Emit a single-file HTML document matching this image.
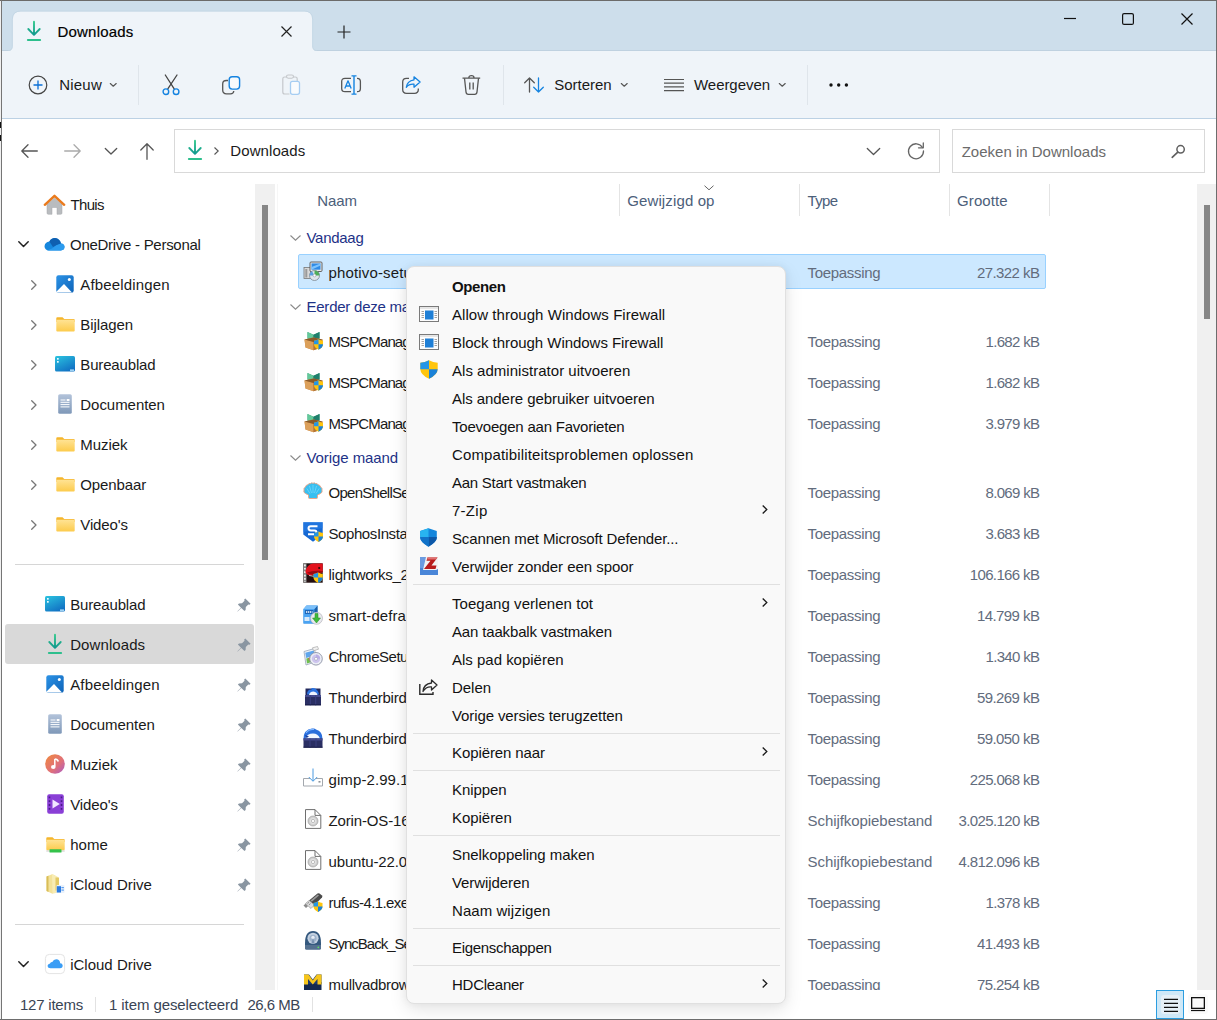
<!DOCTYPE html>
<html lang="nl"><head><meta charset="utf-8"><title>Downloads</title><style>
html,body{margin:0;padding:0;}
body{width:1217px;height:1020px;overflow:hidden;background:#fff;font-family:"Liberation Sans", sans-serif;position:relative;}
.b{position:absolute;box-sizing:border-box;}
.t{position:absolute;white-space:pre;box-sizing:border-box;}
svg{overflow:visible}
</style></head><body>
<div class="b" style="left:0px;top:0px;width:1217px;height:51px;background:#cddeeb;border-bottom:1px solid #bfd1e0;"></div>
<div class="b" style="left:0px;top:51px;width:1217px;height:68px;background:#eff4f9;border-bottom:1px solid #bcd1e4;"></div>
<svg class="b" style="left:2px;top:11px" width="322" height="40" viewBox="0 0 322 40"><path d="M6 40Q10.800 40 10.800 35L10.800 8.500Q10.800 0.500 18.800 0.500L302.200 0.500Q310.200 0.500 310.200 8.500L310.200 35Q310.200 40 315 40Z" fill="#eff4f9"/><path d="M6 39.500Q10.300 39.500 10.300 35L10.300 8.500Q10.300 0 18.800 0L302.200 0Q310.700 0 310.700 8.500L310.700 35Q310.700 39.500 315 39.500" fill="none" stroke="#c3d5e3" stroke-width=".8"/></svg>
<svg class="b" style="left:27px;top:21px;" width="14.0" height="20.0" viewBox="0 0 14 20"><defs><linearGradient id="dlg27" x1="0" y1="0" x2="0" y2="1"><stop offset="0" stop-color="#35c98e"/><stop offset="1" stop-color="#11998e"/></linearGradient></defs><path d="M7 0.800V13.500M1.300 8L7 13.800L12.700 8" fill="none" stroke="url(#dlg27)" stroke-width="1.900" stroke-linecap="round" stroke-linejoin="round"/><path d="M0.800 19H13.200" stroke="#2dbf8d" stroke-width="1.800" stroke-linecap="round"/></svg>
<div class="t" style="left:57.5px;top:21.5px;height:20px;line-height:20px;font-size:15px;color:#000;letter-spacing:0.198px;-webkit-text-stroke:0.18px #000;">Downloads</div>
<svg class="b" style="left:281px;top:26px;" width="11" height="11" viewBox="0 0 11 11"><path d="M0.500 0.500L10.500 10.500M10.500 0.500L0.500 10.500" stroke="#222" stroke-width="1.200" fill="none"/></svg>
<svg class="b" style="left:337px;top:25px;" width="14" height="14" viewBox="0 0 14 14"><path d="M7 0.500V13.500M0.500 7H13.500" stroke="#222" stroke-width="1.200" fill="none"/></svg>
<svg class="b" style="left:1064px;top:18px;" width="12" height="1" viewBox="0 0 12 1"><path d="M0 0.500H12" stroke="#111" stroke-width="1.200"/></svg>
<svg class="b" style="left:1122px;top:13px;" width="12" height="12" viewBox="0 0 12 12"><rect x="0.600" y="0.600" width="10.800" height="10.800" rx="1.500" fill="none" stroke="#111" stroke-width="1.200"/></svg>
<svg class="b" style="left:1181px;top:13px;" width="12" height="12" viewBox="0 0 12 12"><path d="M0.500 0.500L11.500 11.500M11.500 0.500L0.500 11.500" stroke="#111" stroke-width="1.200" fill="none"/></svg>
<svg class="b" style="left:28px;top:75px;" width="20" height="20" viewBox="0 0 20 20"><circle cx="10" cy="10" r="8.800" fill="none" stroke="#444" stroke-width="1.200"/><path d="M10 5.500V14.500M5.500 10H14.500" stroke="#0a6fd6" stroke-width="1.300"/></svg>
<div class="t" style="left:59.3px;top:75.0px;height:20px;line-height:20px;font-size:15px;color:#1a1a1a;letter-spacing:0.183px;">Nieuw</div>
<svg class="b" style="left:110px;top:83px;" width="6.5" height="4.25" viewBox="0 0 6.5 4.25"><path d="M0.300 0.500L3.25 3.25L6.2 0.500" fill="none" stroke="#555" stroke-width="1.1" stroke-linecap="round" stroke-linejoin="round"/></svg>
<div class="b" style="left:138px;top:65px;width:1px;height:40px;background:#dfe5eb;"></div>
<svg class="b" style="left:162px;top:74px;" width="19" height="22" viewBox="0 0 19 22"><path d="M3.300 1L12.200 14.800M15 1L5.800 14.800" stroke="#444" stroke-width="1.300" fill="none" stroke-linecap="round"/><circle cx="3.900" cy="17.700" r="2.800" fill="none" stroke="#1583e0" stroke-width="1.400"/><circle cx="14.100" cy="17.700" r="2.800" fill="none" stroke="#1583e0" stroke-width="1.400"/></svg>
<svg class="b" style="left:222px;top:75px;" width="19" height="20" viewBox="0 0 19 20"><path d="M6 5.500H4.500Q0.700 5.500 0.700 9V15Q0.700 18.800 4.500 18.800H8.500Q11.500 18.800 11.800 16" fill="none" stroke="#555" stroke-width="1.300"/><rect x="7.200" y="1.800" width="10.400" height="12.300" rx="3" fill="#fff" fill-opacity=".5" stroke="#1583e0" stroke-width="1.400"/></svg>
<svg class="b" style="left:282px;top:74px;" width="19" height="22" viewBox="0 0 19 22"><path d="M7.500 20H2.700Q0.800 20 0.800 18V4.800Q0.800 3 2.700 3H13.300Q15.200 3 15.200 4.800V7" fill="none" stroke="#c5c8cc" stroke-width="1.200"/><rect x="4.500" y="1" width="7" height="3.200" rx="1.600" fill="#eef2f6" stroke="#c5c8cc" stroke-width="1.100"/><rect x="8.500" y="7.300" width="9" height="13" rx="2" fill="#fff" fill-opacity=".6" stroke="#a6cdf2" stroke-width="1.300"/></svg>
<svg class="b" style="left:341px;top:74px;" width="21" height="22" viewBox="0 0 21 22"><path d="M10 4.300H4Q0.700 4.300 0.700 7.500V14.500Q0.700 17.700 4 17.700H10M16 4.300H16.300Q19.400 4.300 19.400 7.500V14.500Q19.400 17.700 16.300 17.700H16" fill="none" stroke="#555" stroke-width="1.300"/><path d="M13 2V20M10.500 1.900H15.500M10.500 20.100H15.500" stroke="#1583e0" stroke-width="1.400" fill="none"/><path d="M3.800 14.500L7 6.800L10.200 14.500M5 12H9" fill="none" stroke="#1583e0" stroke-width="1.300" stroke-linejoin="round"/></svg>
<svg class="b" style="left:402px;top:75px;" width="20" height="20" viewBox="0 0 20 20"><path d="M7 3.300H4.500Q0.700 3.300 0.700 7V14.500Q0.700 18.300 4.500 18.300H12.500Q16.300 18.300 16.300 14.500V13.500" fill="none" stroke="#555" stroke-width="1.300"/><path d="M12 1.800L18.100 7L12 12.200V9.200Q7 8.800 4.300 12.300Q5 6 12 4.800Z" fill="none" stroke="#1583e0" stroke-width="1.300" stroke-linejoin="round"/></svg>
<svg class="b" style="left:462px;top:74px;" width="19" height="22" viewBox="0 0 19 22"><path d="M0.500 4.200H18.200M6.800 3.800Q6.800 1.700 9.400 1.700Q12 1.700 12 3.800" fill="none" stroke="#555" stroke-width="1.300"/><path d="M2.500 4.300L4 18Q4.200 20.300 6.300 20.300H12.700Q14.800 20.300 15 18L16.500 4.300" fill="none" stroke="#555" stroke-width="1.300"/><path d="M7.800 8.500V15.500M11.200 8.500V15.500" stroke="#555" stroke-width="1.300"/></svg>
<div class="b" style="left:503px;top:65px;width:1px;height:40px;background:#dfe5eb;"></div>
<svg class="b" style="left:524px;top:77px;" width="21" height="16" viewBox="0 0 21 16"><path d="M5.500 15V1M0.700 5.800L5.500 1L10.300 5.800" fill="none" stroke="#555" stroke-width="1.300" stroke-linecap="round" stroke-linejoin="round"/><path d="M14.500 1V15M9.700 10.200L14.500 15L19.300 10.200" fill="none" stroke="#1583e0" stroke-width="1.300" stroke-linecap="round" stroke-linejoin="round"/></svg>
<div class="t" style="left:554.3px;top:75.0px;height:20px;line-height:20px;font-size:15px;color:#1a1a1a;letter-spacing:-0.031px;">Sorteren</div>
<svg class="b" style="left:620.5px;top:83px;" width="6.5" height="4.25" viewBox="0 0 6.5 4.25"><path d="M0.300 0.500L3.25 3.25L6.2 0.500" fill="none" stroke="#555" stroke-width="1.1" stroke-linecap="round" stroke-linejoin="round"/></svg>
<svg class="b" style="left:664px;top:78px;" width="20" height="14" viewBox="0 0 20 14"><path d="M0 1.500H20M0 5.200H20M0 8.900H20M0 12.600H20" stroke="#555" stroke-width="1.200"/></svg>
<div class="t" style="left:694px;top:75.0px;height:20px;line-height:20px;font-size:15px;color:#1a1a1a;letter-spacing:-0.049px;">Weergeven</div>
<svg class="b" style="left:779px;top:83px;" width="6.5" height="4.25" viewBox="0 0 6.5 4.25"><path d="M0.300 0.500L3.25 3.25L6.2 0.500" fill="none" stroke="#555" stroke-width="1.1" stroke-linecap="round" stroke-linejoin="round"/></svg>
<div class="b" style="left:807px;top:65px;width:1px;height:40px;background:#dfe5eb;"></div>
<svg class="b" style="left:829px;top:83px;" width="20" height="4" viewBox="0 0 20 4"><circle cx="2" cy="2" r="1.700" fill="#111"/><circle cx="9.700" cy="2" r="1.700" fill="#111"/><circle cx="17.400" cy="2" r="1.700" fill="#111"/></svg>
<svg class="b" style="left:21px;top:144px;" width="17" height="14" viewBox="0 0 17 14"><path d="M16.300 7H1M7 0.800L0.800 7L7 13.200" fill="none" stroke="#555" stroke-width="1.300" stroke-linecap="round" stroke-linejoin="round"/></svg>
<svg class="b" style="left:64px;top:144px;" width="17" height="14" viewBox="0 0 17 14"><path d="M0.700 7H16M10 0.800L16.200 7L10 13.200" fill="none" stroke="#aaa" stroke-width="1.300" stroke-linecap="round" stroke-linejoin="round"/></svg>
<svg class="b" style="left:105px;top:148px;" width="12" height="7.0" viewBox="0 0 12 7.0"><path d="M0.300 0.500L6.0 6.0L11.7 0.500" fill="none" stroke="#555" stroke-width="1.3" stroke-linecap="round" stroke-linejoin="round"/></svg>
<svg class="b" style="left:140px;top:143px;" width="14" height="17" viewBox="0 0 14 17"><path d="M7 16.300V1M0.800 7L7 0.800L13.200 7" fill="none" stroke="#555" stroke-width="1.300" stroke-linecap="round" stroke-linejoin="round"/></svg>
<div class="b" style="left:174px;top:129px;width:766px;height:44px;background:#fff;border:1px solid #d9d9d9;"></div>
<svg class="b" style="left:188px;top:140px;" width="14.0" height="20.0" viewBox="0 0 14 20"><defs><linearGradient id="dlg188" x1="0" y1="0" x2="0" y2="1"><stop offset="0" stop-color="#35c98e"/><stop offset="1" stop-color="#11998e"/></linearGradient></defs><path d="M7 0.800V13.500M1.300 8L7 13.800L12.700 8" fill="none" stroke="url(#dlg188)" stroke-width="1.900" stroke-linecap="round" stroke-linejoin="round"/><path d="M0.800 19H13.200" stroke="#2dbf8d" stroke-width="1.800" stroke-linecap="round"/></svg>
<svg class="b" style="left:214px;top:147px;" width="5" height="8" viewBox="0 0 5 8"><path d="M0.500 0.500L4.200 4L0.500 7.500" fill="none" stroke="#555" stroke-width="1.100"/></svg>
<div class="t" style="left:230.3px;top:141.0px;height:20px;line-height:20px;font-size:15px;color:#1a1a1a;letter-spacing:0.087px;">Downloads</div>
<svg class="b" style="left:867px;top:148px;" width="13" height="7.5" viewBox="0 0 13 7.5"><path d="M0.300 0.500L6.5 6.5L12.7 0.500" fill="none" stroke="#555" stroke-width="1.3" stroke-linecap="round" stroke-linejoin="round"/></svg>
<svg class="b" style="left:907px;top:142px;" width="18" height="18" viewBox="0 0 18 18"><path d="M15.500 5.500A7.500 7.500 0 1 0 16.500 9" fill="none" stroke="#666" stroke-width="1.300" stroke-linecap="round"/><path d="M16.300 1V5.800H11.500" fill="none" stroke="#666" stroke-width="1.300" stroke-linecap="round" stroke-linejoin="round"/></svg>
<div class="b" style="left:952px;top:129px;width:253px;height:44px;background:#fff;border:1px solid #d9d9d9;"></div>
<div class="t" style="left:961.7px;top:142.0px;height:20px;line-height:20px;font-size:15px;color:#6b6b6b;letter-spacing:0.002px;">Zoeken in Downloads</div>
<svg class="b" style="left:1171px;top:144px;" width="14" height="14" viewBox="0 0 14 14"><circle cx="9.600" cy="5.300" r="3.700" fill="none" stroke="#5f5f5f" stroke-width="1.500"/><path d="M6.800 8.200L1.200 13.300" stroke="#5f5f5f" stroke-width="1.700" stroke-linecap="round"/></svg>
<div class="b" style="left:2px;top:184px;width:253px;height:806px;background:#fff;"></div>
<svg class="b" style="left:44px;top:194px;" width="21" height="21" viewBox="0 0 21 21"><path d="M3 10V19Q3 20.300 4.300 20.300H8V13.500H13V20.300H16.700Q18 20.300 18 19V10L10.500 3.500Z" fill="#b9bcbf"/><path d="M3 10V19Q3 20.300 4.300 20.300H8V13.500H13V20.300H16.700Q18 20.300 18 19V10" fill="none" stroke="#a4a7aa" stroke-width=".5"/><path d="M0.800 10.800L10.500 1.800L20.200 10.800" fill="none" stroke="#ea7a1c" stroke-width="2.400" stroke-linecap="round" stroke-linejoin="round"/></svg>
<div class="t" style="left:70.5px;top:194.5px;height:20px;line-height:20px;font-size:15px;color:#1a1a1a;letter-spacing:-0.658px;">Thuis</div>
<svg class="b" style="left:18px;top:241px;" width="11" height="7" viewBox="0 0 11 7"><path d="M0.800 0.800L5.500 5.500L10.200 0.800" fill="none" stroke="#222" stroke-width="1.500" stroke-linecap="round" stroke-linejoin="round"/></svg>
<svg class="b" style="left:44px;top:237px;" width="21" height="14" viewBox="0 0 21 14"><path d="M5 13.500H16.800Q20.500 13.200 20.500 9.800Q20.300 6.800 17 6.500Q15.800 1.500 11 1Q7 1 5.400 4.500Q1 5 0.500 9.200Q0.700 13.200 5 13.500Z" fill="#1687dd"/><path d="M5.400 4.500Q7 1 11 1Q15.800 1.500 17 6.500L9 10Z" fill="#0f5fb0"/><path d="M3 13.500H16.800Q20.500 13.200 20.500 9.800Q20.300 6.800 17 6.500Q12 7.500 8 11.500Z" fill="#2c9bee"/></svg>
<div class="t" style="left:70px;top:234.5px;height:20px;line-height:20px;font-size:15px;color:#1a1a1a;letter-spacing:-0.278px;">OneDrive - Personal</div>
<svg class="b" style="left:31px;top:279.5px;" width="6" height="10" viewBox="0 0 6 10"><path d="M0.700 0.700L5 5L0.700 9.300" fill="none" stroke="#777" stroke-width="1.300" stroke-linecap="round" stroke-linejoin="round"/></svg>
<svg class="b" style="left:56px;top:275px;" width="18" height="18" viewBox="0 0 18 18"><defs><linearGradient id="g1" x1="0" y1="0" x2="1" y2="1"><stop offset="0" stop-color="#2d93e6"/><stop offset="1" stop-color="#0d63b8"/></linearGradient></defs><rect x="0.300" y="0.300" width="17.400" height="17.400" rx="2.200" fill="url(#g1)"/><path d="M0.600 16.500L8 9L16 17.400H2Q0.600 17.400 0.600 16.500Z" fill="#fff"/><circle cx="13.300" cy="4.600" r="1.500" fill="#fff"/></svg>
<div class="t" style="left:80.3px;top:274.5px;height:20px;line-height:20px;font-size:15px;color:#1a1a1a;letter-spacing:0.16px;">Afbeeldingen</div>
<svg class="b" style="left:31px;top:319.5px;" width="6" height="10" viewBox="0 0 6 10"><path d="M0.700 0.700L5 5L0.700 9.300" fill="none" stroke="#777" stroke-width="1.300" stroke-linecap="round" stroke-linejoin="round"/></svg>
<svg class="b" style="left:56px;top:317px;" width="19" height="15" viewBox="0 0 19 15"><defs><linearGradient id="g2" x1="0" y1="0" x2="0" y2="1"><stop offset="0" stop-color="#ffe394"/><stop offset="1" stop-color="#fccb4c"/></linearGradient></defs><path d="M0.300 1.300Q0.300 0.300 1.300 0.300H6.500L8.300 2H17.700Q18.700 2 18.700 3V5H0.300Z" fill="#f5b62e"/><rect x="0.300" y="2.800" width="18.400" height="11.700" rx="1" fill="url(#g2)"/></svg>
<div class="t" style="left:80.3px;top:314.5px;height:20px;line-height:20px;font-size:15px;color:#1a1a1a;letter-spacing:-0.072px;">Bijlagen</div>
<svg class="b" style="left:31px;top:359.5px;" width="6" height="10" viewBox="0 0 6 10"><path d="M0.700 0.700L5 5L0.700 9.300" fill="none" stroke="#777" stroke-width="1.300" stroke-linecap="round" stroke-linejoin="round"/></svg>
<svg class="b" style="left:55px;top:356px;" width="20" height="16" viewBox="0 0 20 16"><defs><linearGradient id="g3" x1="0" y1="0" x2="0.600" y2="1"><stop offset="0" stop-color="#2bc4e0"/><stop offset="1" stop-color="#1273c4"/></linearGradient></defs><rect x="0" y="0" width="20" height="15.500" rx="1.600" fill="url(#g3)"/><rect x="2" y="2" width="1.700" height="1.700" fill="#e8fbff"/><rect x="2" y="5" width="1.700" height="1.700" fill="#e8fbff"/><rect x="15" y="13.500" width="4" height="1.300" fill="#bfe9ff"/></svg>
<div class="t" style="left:80.3px;top:354.5px;height:20px;line-height:20px;font-size:15px;color:#1a1a1a;letter-spacing:-0.153px;">Bureaublad</div>
<svg class="b" style="left:31px;top:399.5px;" width="6" height="10" viewBox="0 0 6 10"><path d="M0.700 0.700L5 5L0.700 9.300" fill="none" stroke="#777" stroke-width="1.300" stroke-linecap="round" stroke-linejoin="round"/></svg>
<svg class="b" style="left:58px;top:394px;" width="14" height="20" viewBox="0 0 14 20"><defs><linearGradient id="g4" x1="0" y1="0" x2="0" y2="1"><stop offset="0" stop-color="#b3c3da"/><stop offset="1" stop-color="#7f98b8"/></linearGradient></defs><rect x="0.200" y="0.200" width="13.600" height="19.600" rx="1.600" fill="url(#g4)"/><path d="M2.500 6H7.500M2.500 8.300H11.500M2.500 10.600H11.500M2.500 12.900H11.500" stroke="#fff" stroke-width="1"/><rect x="8.700" y="5" width="2.800" height="2" fill="#fff"/></svg>
<div class="t" style="left:80.3px;top:394.5px;height:20px;line-height:20px;font-size:15px;color:#1a1a1a;letter-spacing:-0.046px;">Documenten</div>
<svg class="b" style="left:31px;top:439.5px;" width="6" height="10" viewBox="0 0 6 10"><path d="M0.700 0.700L5 5L0.700 9.300" fill="none" stroke="#777" stroke-width="1.300" stroke-linecap="round" stroke-linejoin="round"/></svg>
<svg class="b" style="left:56px;top:437px;" width="19" height="15" viewBox="0 0 19 15"><defs><linearGradient id="g5" x1="0" y1="0" x2="0" y2="1"><stop offset="0" stop-color="#ffe394"/><stop offset="1" stop-color="#fccb4c"/></linearGradient></defs><path d="M0.300 1.300Q0.300 0.300 1.300 0.300H6.500L8.300 2H17.700Q18.700 2 18.700 3V5H0.300Z" fill="#f5b62e"/><rect x="0.300" y="2.800" width="18.400" height="11.700" rx="1" fill="url(#g5)"/></svg>
<div class="t" style="left:80.3px;top:434.5px;height:20px;line-height:20px;font-size:15px;color:#1a1a1a;letter-spacing:-0.053px;">Muziek</div>
<svg class="b" style="left:31px;top:479.5px;" width="6" height="10" viewBox="0 0 6 10"><path d="M0.700 0.700L5 5L0.700 9.300" fill="none" stroke="#777" stroke-width="1.300" stroke-linecap="round" stroke-linejoin="round"/></svg>
<svg class="b" style="left:56px;top:477px;" width="19" height="15" viewBox="0 0 19 15"><defs><linearGradient id="g6" x1="0" y1="0" x2="0" y2="1"><stop offset="0" stop-color="#ffe394"/><stop offset="1" stop-color="#fccb4c"/></linearGradient></defs><path d="M0.300 1.300Q0.300 0.300 1.300 0.300H6.500L8.300 2H17.700Q18.700 2 18.700 3V5H0.300Z" fill="#f5b62e"/><rect x="0.300" y="2.800" width="18.400" height="11.700" rx="1" fill="url(#g6)"/></svg>
<div class="t" style="left:80.3px;top:474.5px;height:20px;line-height:20px;font-size:15px;color:#1a1a1a;letter-spacing:-0.115px;">Openbaar</div>
<svg class="b" style="left:31px;top:519.5px;" width="6" height="10" viewBox="0 0 6 10"><path d="M0.700 0.700L5 5L0.700 9.300" fill="none" stroke="#777" stroke-width="1.300" stroke-linecap="round" stroke-linejoin="round"/></svg>
<svg class="b" style="left:56px;top:517px;" width="19" height="15" viewBox="0 0 19 15"><defs><linearGradient id="g7" x1="0" y1="0" x2="0" y2="1"><stop offset="0" stop-color="#ffe394"/><stop offset="1" stop-color="#fccb4c"/></linearGradient></defs><path d="M0.300 1.300Q0.300 0.300 1.300 0.300H6.500L8.300 2H17.700Q18.700 2 18.700 3V5H0.300Z" fill="#f5b62e"/><rect x="0.300" y="2.800" width="18.400" height="11.700" rx="1" fill="url(#g7)"/></svg>
<div class="t" style="left:80.3px;top:514.5px;height:20px;line-height:20px;font-size:15px;color:#1a1a1a;letter-spacing:-0.124px;">Video&#x27;s</div>
<div class="b" style="left:15px;top:564px;width:229px;height:1px;background:#d6d6d6;"></div>
<div class="b" style="left:5px;top:624px;width:249px;height:40px;background:#d9d9d9;border-radius:3px;"></div>
<svg class="b" style="left:45px;top:596px;" width="20" height="16" viewBox="0 0 20 16"><defs><linearGradient id="g8" x1="0" y1="0" x2="0.600" y2="1"><stop offset="0" stop-color="#2bc4e0"/><stop offset="1" stop-color="#1273c4"/></linearGradient></defs><rect x="0" y="0" width="20" height="15.500" rx="1.600" fill="url(#g8)"/><rect x="2" y="2" width="1.700" height="1.700" fill="#e8fbff"/><rect x="2" y="5" width="1.700" height="1.700" fill="#e8fbff"/><rect x="15" y="13.500" width="4" height="1.300" fill="#bfe9ff"/></svg>
<div class="t" style="left:70.2px;top:594.5px;height:20px;line-height:20px;font-size:15px;color:#1a1a1a;letter-spacing:-0.153px;">Bureaublad</div>
<svg class="b" style="left:237px;top:597.5px;" width="14" height="14" viewBox="0 0 14 14"><path d="M8.300 0.400L13.600 5.700L12.500 6.800L11.300 6.500L8.800 9L8.600 12L7.500 13.100L4.300 9.900L0.700 13.500L0.400 13.300L4 9.700L0.900 6.500L2 5.400L5 5.200L7.500 2.700L7.200 1.500Z" fill="#8a96a2"/></svg>
<svg class="b" style="left:48px;top:634px;" width="14.0" height="20.0" viewBox="0 0 14 20"><defs><linearGradient id="dlg48" x1="0" y1="0" x2="0" y2="1"><stop offset="0" stop-color="#35c98e"/><stop offset="1" stop-color="#11998e"/></linearGradient></defs><path d="M7 0.800V13.500M1.300 8L7 13.800L12.700 8" fill="none" stroke="url(#dlg48)" stroke-width="1.900" stroke-linecap="round" stroke-linejoin="round"/><path d="M0.800 19H13.200" stroke="#2dbf8d" stroke-width="1.800" stroke-linecap="round"/></svg>
<div class="t" style="left:70.2px;top:634.5px;height:20px;line-height:20px;font-size:15px;color:#1a1a1a;letter-spacing:0.087px;">Downloads</div>
<svg class="b" style="left:237px;top:637.5px;" width="14" height="14" viewBox="0 0 14 14"><path d="M8.300 0.400L13.600 5.700L12.500 6.800L11.300 6.500L8.800 9L8.600 12L7.500 13.100L4.300 9.900L0.700 13.500L0.400 13.300L4 9.700L0.900 6.500L2 5.400L5 5.200L7.500 2.700L7.200 1.500Z" fill="#8a96a2"/></svg>
<svg class="b" style="left:46px;top:675px;" width="18" height="18" viewBox="0 0 18 18"><defs><linearGradient id="g9" x1="0" y1="0" x2="1" y2="1"><stop offset="0" stop-color="#2d93e6"/><stop offset="1" stop-color="#0d63b8"/></linearGradient></defs><rect x="0.300" y="0.300" width="17.400" height="17.400" rx="2.200" fill="url(#g9)"/><path d="M0.600 16.500L8 9L16 17.400H2Q0.600 17.400 0.600 16.500Z" fill="#fff"/><circle cx="13.300" cy="4.600" r="1.500" fill="#fff"/></svg>
<div class="t" style="left:70.2px;top:674.5px;height:20px;line-height:20px;font-size:15px;color:#1a1a1a;letter-spacing:0.16px;">Afbeeldingen</div>
<svg class="b" style="left:237px;top:677.5px;" width="14" height="14" viewBox="0 0 14 14"><path d="M8.300 0.400L13.600 5.700L12.500 6.800L11.300 6.500L8.800 9L8.600 12L7.500 13.100L4.300 9.900L0.700 13.500L0.400 13.300L4 9.700L0.900 6.500L2 5.400L5 5.200L7.500 2.700L7.200 1.500Z" fill="#8a96a2"/></svg>
<svg class="b" style="left:48px;top:714px;" width="14" height="20" viewBox="0 0 14 20"><defs><linearGradient id="g10" x1="0" y1="0" x2="0" y2="1"><stop offset="0" stop-color="#b3c3da"/><stop offset="1" stop-color="#7f98b8"/></linearGradient></defs><rect x="0.200" y="0.200" width="13.600" height="19.600" rx="1.600" fill="url(#g10)"/><path d="M2.500 6H7.500M2.500 8.300H11.500M2.500 10.600H11.500M2.500 12.900H11.500" stroke="#fff" stroke-width="1"/><rect x="8.700" y="5" width="2.800" height="2" fill="#fff"/></svg>
<div class="t" style="left:70.2px;top:714.5px;height:20px;line-height:20px;font-size:15px;color:#1a1a1a;letter-spacing:-0.046px;">Documenten</div>
<svg class="b" style="left:237px;top:717.5px;" width="14" height="14" viewBox="0 0 14 14"><path d="M8.300 0.400L13.600 5.700L12.500 6.800L11.300 6.500L8.800 9L8.600 12L7.500 13.100L4.300 9.900L0.700 13.500L0.400 13.300L4 9.700L0.900 6.500L2 5.400L5 5.200L7.500 2.700L7.200 1.500Z" fill="#8a96a2"/></svg>
<svg class="b" style="left:45px;top:754px;" width="20" height="20" viewBox="0 0 20 20"><defs><linearGradient id="g11" x1="0" y1="0" x2="1" y2="1"><stop offset="0" stop-color="#f08a3c"/><stop offset="0.600" stop-color="#e0707a"/><stop offset="1" stop-color="#a85bc8"/></linearGradient></defs><circle cx="10" cy="10" r="9.800" fill="url(#g11)"/><path d="M9.800 5V12.500" stroke="#fff" stroke-width="1.500"/><path d="M9.800 5Q12.500 5 13.300 7.500" stroke="#fff" stroke-width="1.700" fill="none"/><ellipse cx="8.300" cy="13" rx="2.300" ry="1.900" fill="#fff"/></svg>
<div class="t" style="left:70.2px;top:754.5px;height:20px;line-height:20px;font-size:15px;color:#1a1a1a;letter-spacing:-0.053px;">Muziek</div>
<svg class="b" style="left:237px;top:757.5px;" width="14" height="14" viewBox="0 0 14 14"><path d="M8.300 0.400L13.600 5.700L12.500 6.800L11.300 6.500L8.800 9L8.600 12L7.500 13.100L4.300 9.900L0.700 13.500L0.400 13.300L4 9.700L0.900 6.500L2 5.400L5 5.200L7.500 2.700L7.200 1.500Z" fill="#8a96a2"/></svg>
<svg class="b" style="left:47px;top:794px;" width="17" height="20" viewBox="0 0 17 20"><rect x="0.200" y="0.200" width="16.600" height="19.600" rx="2" fill="#8a3fd6"/><path d="M2.500 2.500V17.500M14.500 2.500V17.500" stroke="#4b1c8a" stroke-width="1.600" stroke-dasharray="1.800 2"/><path d="M5.500 5.500L12.800 10L5.500 14.500Z" fill="#f1e6ff"/></svg>
<div class="t" style="left:70.2px;top:794.5px;height:20px;line-height:20px;font-size:15px;color:#1a1a1a;letter-spacing:-0.124px;">Video&#x27;s</div>
<svg class="b" style="left:237px;top:797.5px;" width="14" height="14" viewBox="0 0 14 14"><path d="M8.300 0.400L13.600 5.700L12.500 6.800L11.300 6.500L8.800 9L8.600 12L7.500 13.100L4.300 9.900L0.700 13.500L0.400 13.300L4 9.700L0.900 6.500L2 5.400L5 5.200L7.500 2.700L7.200 1.500Z" fill="#8a96a2"/></svg>
<svg class="b" style="left:46px;top:837px;" width="19" height="16" viewBox="0 0 19 16"><defs><linearGradient id="g12" x1="0" y1="0" x2="0" y2="1"><stop offset="0" stop-color="#ffe394"/><stop offset="1" stop-color="#fccb4c"/></linearGradient></defs><path d="M0.300 1.300Q0.300 0.300 1.300 0.300H6.500L8.300 2H17.700Q18.700 2 18.700 3V5H0.300Z" fill="#f5b62e"/><rect x="0.300" y="2.800" width="18.400" height="10.500" rx="1" fill="url(#g12)"/><rect x="0.300" y="13.500" width="18.400" height="1" fill="#c9c9c9"/><rect x="3.500" y="12.200" width="12" height="3.300" rx=".6" fill="#34c24a"/></svg>
<div class="t" style="left:70.2px;top:834.5px;height:20px;line-height:20px;font-size:15px;color:#1a1a1a;letter-spacing:0.017px;">home</div>
<svg class="b" style="left:237px;top:837.5px;" width="14" height="14" viewBox="0 0 14 14"><path d="M8.300 0.400L13.600 5.700L12.500 6.800L11.300 6.500L8.800 9L8.600 12L7.500 13.100L4.300 9.900L0.700 13.500L0.400 13.300L4 9.700L0.900 6.500L2 5.400L5 5.200L7.500 2.700L7.200 1.500Z" fill="#8a96a2"/></svg>
<svg class="b" style="left:46px;top:874px;" width="19" height="20" viewBox="0 0 19 20"><path d="M0.500 2.500L6 0.300L9 1.300V17L6.500 19.700L0.500 17Z" fill="#f3e29a"/><path d="M0.500 2.500L2.500 1.700V18L0.500 17Z" fill="#d9bd58"/><path d="M6 0.300L9 1.300L12 3V18.500L6.500 19.700Z" fill="#f8ecb4"/><path d="M9.500 3.500H13V16.500H9.500Z" fill="#e3c964"/><rect x="10.500" y="11" width="8" height="8" rx="1" fill="#e9f1fb"/><rect x="10.800" y="12.200" width="4.200" height="6.300" fill="#2c7be0"/><rect x="15.400" y="13" width="2.500" height="1.200" fill="#5d9ff0"/><rect x="15.400" y="15.500" width="2.500" height="1.200" fill="#5d9ff0"/></svg>
<div class="t" style="left:70.2px;top:874.5px;height:20px;line-height:20px;font-size:15px;color:#1a1a1a;letter-spacing:0px;">iCloud Drive</div>
<svg class="b" style="left:237px;top:877.5px;" width="14" height="14" viewBox="0 0 14 14"><path d="M8.300 0.400L13.600 5.700L12.500 6.800L11.300 6.500L8.800 9L8.600 12L7.500 13.100L4.300 9.900L0.700 13.500L0.400 13.300L4 9.700L0.900 6.500L2 5.400L5 5.200L7.500 2.700L7.200 1.500Z" fill="#8a96a2"/></svg>
<div class="b" style="left:15px;top:924px;width:229px;height:1px;background:#d6d6d6;"></div>
<svg class="b" style="left:18px;top:961px;" width="11" height="7" viewBox="0 0 11 7"><path d="M0.800 0.800L5.500 5.500L10.200 0.800" fill="none" stroke="#222" stroke-width="1.500" stroke-linecap="round" stroke-linejoin="round"/></svg>
<svg class="b" style="left:45px;top:954px;" width="20" height="20" viewBox="0 0 20 20"><rect x="0.400" y="0.400" width="19.200" height="19.200" rx="4" fill="#fff" stroke="#dcdcdc" stroke-width=".8"/><path d="M5.500 14.300H15Q17.800 14 17.700 11.500Q17.500 9.300 15.200 9.200Q14.800 5.500 11.200 5.300Q8.500 5.300 7.300 8Q5.500 7.800 5 9.500Q2.500 10 2.500 12Q2.800 14.200 5.500 14.300Z" fill="#3a9df5"/></svg>
<div class="t" style="left:70.2px;top:954.5px;height:20px;line-height:20px;font-size:15px;color:#1a1a1a;letter-spacing:0px;">iCloud Drive</div>
<div class="b" style="left:255px;top:184px;width:20px;height:806px;background:#f0f0f0;"></div>
<div class="b" style="left:262px;top:205px;width:6px;height:355px;background:#868686;"></div>
<div class="b" style="left:275px;top:184px;width:922px;height:806px;background:#fff;"></div>
<div class="b" style="left:277px;top:184px;width:1px;height:806px;background:#f6f6f6;"></div>
<div class="t" style="left:317.3px;top:191.0px;height:20px;line-height:20px;font-size:15px;color:#4c607a;letter-spacing:-0.079px;">Naam</div>
<div class="t" style="left:627.2px;top:191.0px;height:20px;line-height:20px;font-size:15px;color:#4c607a;letter-spacing:0.126px;">Gewijzigd op</div>
<div class="t" style="left:807.5px;top:191.0px;height:20px;line-height:20px;font-size:15px;color:#4c607a;letter-spacing:-0.633px;">Type</div>
<div class="t" style="left:957px;top:191.0px;height:20px;line-height:20px;font-size:15px;color:#4c607a;letter-spacing:0.11px;">Grootte</div>
<div class="b" style="left:619px;top:184px;width:1px;height:32px;background:#e4e4e4;"></div>
<div class="b" style="left:799px;top:184px;width:1px;height:32px;background:#e4e4e4;"></div>
<div class="b" style="left:949px;top:184px;width:1px;height:32px;background:#e4e4e4;"></div>
<div class="b" style="left:1049px;top:184px;width:1px;height:32px;background:#e4e4e4;"></div>
<svg class="b" style="left:704px;top:185px;" width="10" height="6" viewBox="0 0 10 6"><path d="M0.500 0.700L5 4.800L9.500 0.700" fill="none" stroke="#666" stroke-width="1"/></svg>
<svg class="b" style="left:290px;top:235px;" width="11" height="6" viewBox="0 0 11 6"><path d="M0.500 0.500L5.500 5.200L10.500 0.500" fill="none" stroke="#8a8a8a" stroke-width="1.100"/></svg>
<div class="t" style="left:306.5px;top:228.0px;height:20px;line-height:20px;font-size:15px;color:#1e3287;letter-spacing:-0.279px;">Vandaag</div>
<svg class="b" style="left:290px;top:304px;" width="11" height="6" viewBox="0 0 11 6"><path d="M0.500 0.500L5.500 5.200L10.500 0.500" fill="none" stroke="#8a8a8a" stroke-width="1.100"/></svg>
<div class="t" style="left:306.5px;top:297.0px;height:20px;line-height:20px;font-size:15px;color:#1e3287;letter-spacing:-0.238px;">Eerder deze maand</div>
<svg class="b" style="left:290px;top:455px;" width="11" height="6" viewBox="0 0 11 6"><path d="M0.500 0.500L5.500 5.200L10.500 0.500" fill="none" stroke="#8a8a8a" stroke-width="1.100"/></svg>
<div class="t" style="left:306.5px;top:448.0px;height:20px;line-height:20px;font-size:15px;color:#1e3287;letter-spacing:-0.082px;">Vorige maand</div>
<div class="b" style="left:298px;top:254px;width:748px;height:35px;background:#cce8ff;border:1px solid #99d1ff;border-radius:2px;"></div>
<div class="b" style="left:275px;top:216px;width:920px;height:774px;overflow:hidden;">
<svg class="b" style="left:28px;top:45px;" width="20" height="20" viewBox="0 0 20 20"><rect x="1" y="6.500" width="6.500" height="11" fill="#d8d8d8" stroke="#777" stroke-width=".8"/><rect x="2.300" y="8" width="2" height="8.500" fill="#9a9a9a"/><rect x="7" y="1" width="12" height="9.500" rx="1" fill="#e9e9e9" stroke="#555" stroke-width=".9"/><rect x="8.500" y="2.400" width="9" height="6.300" fill="#2f8be6"/><path d="M8.500 6L17.500 2.400V4.500L8.500 8.700Z" fill="#7cc4ff"/><rect x="10.500" y="10.500" width="5" height="1.600" fill="#777"/><circle cx="11.500" cy="14.500" r="5" fill="#dfe6ec" stroke="#7b8791" stroke-width=".8"/><path d="M11.500 9.500A5 5 0 0 1 16.500 14.500L11.500 14.500Z" fill="#4fae5a"/><path d="M6.500 14.500A5 5 0 0 1 9 10.200L11.500 14.500Z" fill="#5aa0e0"/><circle cx="11.500" cy="14.500" r="1.400" fill="#fff" stroke="#889" stroke-width=".5"/></svg>
<div class="t" style="left:53.5px;top:47.0px;height:20px;line-height:20px;font-size:15px;color:#1a1a1a;letter-spacing:0.148px;">photivo-setup</div>
<div class="t" style="left:532.5px;top:47.0px;height:20px;line-height:20px;font-size:15px;color:#626c7d;letter-spacing:-0.299px;">Toepassing</div>
<div class="t" style="left:701.9000000000001px;top:47.0px;height:20px;line-height:20px;font-size:15px;color:#626c7d;letter-spacing:-0.562px;">27.322 kB</div>
<svg class="b" style="left:29px;top:115px;" width="20" height="20" viewBox="0 0 20 20"><path d="M3.500 1L9.500 3.800L15.500 1V7.500L9.500 9.500L3.500 7.500Z" fill="#2f9d78"/><path d="M3.500 1L9.500 3.800V9.500L3.500 7.500Z" fill="#63c99a"/><path d="M9.500 3.800L15.500 1V7.500L9.500 9.500Z" fill="#1f7f6c"/><path d="M0.500 8.500L9.500 6.500L18.500 8.500L17.500 16.500L9.500 19.300L1.500 16.500Z" fill="#c98a4b"/><path d="M0.500 8.500L9.500 11V19.300L1.500 16.500Z" fill="#dca05a"/><path d="M9.500 11L18.500 8.500L17.500 16.500L9.500 19.300Z" fill="#b27436"/><path d="M0.500 8.500L9.500 6.500L18.500 8.500L9.500 11Z" fill="#8a5a2a"/><path d="M14.5 8.3Q16.75 9.770000000000001 19 9.770000000000001V13.34Q19 16.700000000000003 14.5 18.8Q10 16.700000000000003 10 13.34V9.770000000000001Q12.25 9.770000000000001 14.5 8.3Z" fill="#ffc50d"/><path d="M14.5 8.3Q12.25 9.770000000000001 10 9.770000000000001V13.34H14.5Z" fill="#2496e6"/><path d="M14.5 13.34H19Q19 16.700000000000003 14.5 18.8Z" fill="#1a82d8"/></svg>
<div class="t" style="left:53.5px;top:115.5px;height:20px;line-height:20px;font-size:15px;color:#1a1a1a;letter-spacing:-0.882px;">MSPCManager</div>
<div class="t" style="left:532.5px;top:115.5px;height:20px;line-height:20px;font-size:15px;color:#626c7d;letter-spacing:-0.299px;">Toepassing</div>
<div class="t" style="left:710.5000000000001px;top:115.5px;height:20px;line-height:20px;font-size:15px;color:#626c7d;letter-spacing:-0.665px;">1.682 kB</div>
<svg class="b" style="left:29px;top:156px;" width="20" height="20" viewBox="0 0 20 20"><path d="M3.500 1L9.500 3.800L15.500 1V7.500L9.500 9.500L3.500 7.500Z" fill="#2f9d78"/><path d="M3.500 1L9.500 3.800V9.500L3.500 7.500Z" fill="#63c99a"/><path d="M9.500 3.800L15.500 1V7.500L9.500 9.500Z" fill="#1f7f6c"/><path d="M0.500 8.500L9.500 6.500L18.500 8.500L17.500 16.500L9.500 19.300L1.500 16.500Z" fill="#c98a4b"/><path d="M0.500 8.500L9.500 11V19.300L1.500 16.500Z" fill="#dca05a"/><path d="M9.500 11L18.500 8.500L17.500 16.500L9.500 19.300Z" fill="#b27436"/><path d="M0.500 8.500L9.500 6.500L18.500 8.500L9.500 11Z" fill="#8a5a2a"/><path d="M14.5 8.3Q16.75 9.770000000000001 19 9.770000000000001V13.34Q19 16.700000000000003 14.5 18.8Q10 16.700000000000003 10 13.34V9.770000000000001Q12.25 9.770000000000001 14.5 8.3Z" fill="#ffc50d"/><path d="M14.5 8.3Q12.25 9.770000000000001 10 9.770000000000001V13.34H14.5Z" fill="#2496e6"/><path d="M14.5 13.34H19Q19 16.700000000000003 14.5 18.8Z" fill="#1a82d8"/></svg>
<div class="t" style="left:53.5px;top:156.5px;height:20px;line-height:20px;font-size:15px;color:#1a1a1a;letter-spacing:-0.882px;">MSPCManager</div>
<div class="t" style="left:532.5px;top:156.5px;height:20px;line-height:20px;font-size:15px;color:#626c7d;letter-spacing:-0.299px;">Toepassing</div>
<div class="t" style="left:710.5000000000001px;top:156.5px;height:20px;line-height:20px;font-size:15px;color:#626c7d;letter-spacing:-0.665px;">1.682 kB</div>
<svg class="b" style="left:29px;top:197px;" width="20" height="20" viewBox="0 0 20 20"><path d="M3.500 1L9.500 3.800L15.500 1V7.500L9.500 9.500L3.500 7.500Z" fill="#2f9d78"/><path d="M3.500 1L9.500 3.800V9.500L3.500 7.500Z" fill="#63c99a"/><path d="M9.500 3.800L15.500 1V7.500L9.500 9.500Z" fill="#1f7f6c"/><path d="M0.500 8.500L9.500 6.500L18.500 8.500L17.500 16.500L9.500 19.300L1.500 16.500Z" fill="#c98a4b"/><path d="M0.500 8.500L9.500 11V19.300L1.500 16.500Z" fill="#dca05a"/><path d="M9.500 11L18.500 8.500L17.500 16.500L9.500 19.300Z" fill="#b27436"/><path d="M0.500 8.500L9.500 6.500L18.500 8.500L9.500 11Z" fill="#8a5a2a"/><path d="M14.5 8.3Q16.75 9.770000000000001 19 9.770000000000001V13.34Q19 16.700000000000003 14.5 18.8Q10 16.700000000000003 10 13.34V9.770000000000001Q12.25 9.770000000000001 14.5 8.3Z" fill="#ffc50d"/><path d="M14.5 8.3Q12.25 9.770000000000001 10 9.770000000000001V13.34H14.5Z" fill="#2496e6"/><path d="M14.5 13.34H19Q19 16.700000000000003 14.5 18.8Z" fill="#1a82d8"/></svg>
<div class="t" style="left:53.5px;top:197.5px;height:20px;line-height:20px;font-size:15px;color:#1a1a1a;letter-spacing:-0.882px;">MSPCManager</div>
<div class="t" style="left:532.5px;top:197.5px;height:20px;line-height:20px;font-size:15px;color:#626c7d;letter-spacing:-0.299px;">Toepassing</div>
<div class="t" style="left:710.5000000000001px;top:197.5px;height:20px;line-height:20px;font-size:15px;color:#626c7d;letter-spacing:-0.665px;">3.979 kB</div>
<svg class="b" style="left:28px;top:266px;" width="20" height="20" viewBox="0 0 20 20"><path d="M10 1.300Q11.300 0.300 12.600 1.600Q14.300 1.200 15.200 2.800Q17.200 3 17.600 5Q19.500 6 19 8.200Q19.800 10.500 17.500 11.500Q15.500 12.500 14.500 13V15.500Q14.500 16.500 13.500 16.500H6.500Q5.500 16.500 5.500 15.500V13Q4.500 12.500 2.500 11.500Q0.200 10.500 1 8.200Q0.500 6 2.400 5Q2.800 3 4.800 2.800Q5.700 1.200 7.400 1.600Q8.700 0.300 10 1.300Z" fill="#38bff0" stroke="#eaa68a" stroke-width="1"/><path d="M10 3V11M6.500 4L8.500 11M13.500 4L11.500 11M3.800 6.500L7 11.500M16.200 6.500L13 11.500" stroke="#6bd4fa" stroke-width=".9" fill="none"/></svg>
<div class="t" style="left:53.5px;top:266.5px;height:20px;line-height:20px;font-size:15px;color:#1a1a1a;letter-spacing:-0.726px;">OpenShellSetup</div>
<div class="t" style="left:532.5px;top:266.5px;height:20px;line-height:20px;font-size:15px;color:#626c7d;letter-spacing:-0.299px;">Toepassing</div>
<div class="t" style="left:710.5000000000001px;top:266.5px;height:20px;line-height:20px;font-size:15px;color:#626c7d;letter-spacing:-0.665px;">8.069 kB</div>
<svg class="b" style="left:28px;top:306px;" width="20" height="20" viewBox="0 0 20 20"><path d="M0.300 0.300H19.700V12.500L10 19.700L0.300 12.500Z" fill="#1568d3"/><path d="M0.300 0.300H19.700V6L0.300 10Z" fill="#2a7ee6" fill-opacity=".6"/><path d="M14.500 4.200H7.800Q5.500 4.200 5.500 6.300Q5.500 8.400 7.800 8.400H11.500Q13.500 8.400 13.500 10.300Q13.500 12.200 11.500 12.200H5" fill="none" stroke="#fff" stroke-width="2"/><path d="M15.5 9.5Q17.75 10.97 20 10.97V14.54Q20 17.9 15.5 20.0Q11 17.9 11 14.54V10.97Q13.25 10.97 15.5 9.5Z" fill="#ffc50d"/><path d="M15.5 9.5Q13.25 10.97 11 10.97V14.54H15.5Z" fill="#2496e6"/><path d="M15.5 14.54H20Q20 17.9 15.5 20.0Z" fill="#1a82d8"/></svg>
<div class="t" style="left:53.5px;top:307.5px;height:20px;line-height:20px;font-size:15px;color:#1a1a1a;letter-spacing:-0.416px;">SophosInstall</div>
<div class="t" style="left:532.5px;top:307.5px;height:20px;line-height:20px;font-size:15px;color:#626c7d;letter-spacing:-0.299px;">Toepassing</div>
<div class="t" style="left:710.5000000000001px;top:307.5px;height:20px;line-height:20px;font-size:15px;color:#626c7d;letter-spacing:-0.665px;">3.683 kB</div>
<svg class="b" style="left:28px;top:347px;" width="20" height="20" viewBox="0 0 20 20"><rect x="0.300" y="0.300" width="19.400" height="19.400" fill="#241012"/><rect x="0.300" y="0.300" width="3.200" height="19.400" fill="#8c8c8c"/><path d="M1.900 1.500V19" stroke="#f2f2f2" stroke-width="1.700" stroke-dasharray="1.700 1.700"/><path d="M2.500 8Q4 1.500 10 0.500H19.700V9Q16 11.500 11 11.500Q8 13.500 5.500 12Q2.500 11 2.500 8Z" fill="#e3121d"/><path d="M4 9.500Q10 7 19.700 8V9Q16 11.500 11 11.500Q6 12 4 9.500Z" fill="#9c0a12"/><circle cx="16.200" cy="5" r="1.100" fill="#2a0a0a"/><path d="M6 12.500L12 13.500" stroke="#ddd" stroke-width=".8"/><path d="M15.15 9.5Q17.475 10.97 19.8 10.97V14.54Q19.8 17.9 15.15 20.0Q10.5 17.9 10.5 14.54V10.97Q12.825 10.97 15.15 9.5Z" fill="#ffc50d"/><path d="M15.15 9.5Q12.825 10.97 10.5 10.97V14.54H15.15Z" fill="#2496e6"/><path d="M15.15 14.54H19.8Q19.8 17.9 15.15 20.0Z" fill="#1a82d8"/></svg>
<div class="t" style="left:53.5px;top:348.5px;height:20px;line-height:20px;font-size:15px;color:#1a1a1a;letter-spacing:-0.266px;">lightworks_2</div>
<div class="t" style="left:532.5px;top:348.5px;height:20px;line-height:20px;font-size:15px;color:#626c7d;letter-spacing:-0.299px;">Toepassing</div>
<div class="t" style="left:694.7px;top:348.5px;height:20px;line-height:20px;font-size:15px;color:#626c7d;letter-spacing:-0.621px;">106.166 kB</div>
<svg class="b" style="left:28px;top:389px;" width="20" height="20" viewBox="0 0 20 20"><path d="M0.500 4L3.500 0.500H14.500V15L11.500 18.500H0.500Z" fill="#2f8be0"/><path d="M0.500 4H11.500V18.500H0.500Z" fill="#4aa3f2"/><path d="M11.500 4L14.500 0.500V15L11.500 18.500Z" fill="#1a5fa8"/><path d="M0.500 4L3.500 0.500H14.500L11.500 4Z" fill="#7cc0fa"/><rect x="2" y="5" width="8.500" height="4" fill="#1e66b8"/><path d="M3 7H9.500" stroke="#fff" stroke-width="1.600" stroke-dasharray="1.300 .7"/><rect x="1.500" y="12" width="5" height="4" fill="#d7e9fa"/><circle cx="13.500" cy="13.300" r="6" fill="#e9e9ee" stroke="#b4b4bc" stroke-width=".7"/><circle cx="13.500" cy="13.300" r="2" fill="#fff" stroke="#c4c4cc" stroke-width=".5"/><path d="M12 8.500H15V13H17.500L13.500 18L9.500 13H12Z" fill="#3fba3a" stroke="#2a8f28" stroke-width=".5"/></svg>
<div class="t" style="left:53.5px;top:389.5px;height:20px;line-height:20px;font-size:15px;color:#1a1a1a;letter-spacing:0.066px;">smart-defrag</div>
<div class="t" style="left:532.5px;top:389.5px;height:20px;line-height:20px;font-size:15px;color:#626c7d;letter-spacing:-0.299px;">Toepassing</div>
<div class="t" style="left:701.9000000000001px;top:389.5px;height:20px;line-height:20px;font-size:15px;color:#626c7d;letter-spacing:-0.562px;">14.799 kB</div>
<svg class="b" style="left:28px;top:430px;" width="20" height="20" viewBox="0 0 20 20"><path d="M1 5.500L11.500 2.500L13.500 15.500L3 19Z" fill="#eef3f9" stroke="#9aa6b6" stroke-width=".8"/><path d="M2.300 6.800L10.800 4.400L11.600 9.500L3.200 12Z" fill="#5fa5ec"/><path d="M3.300 12.500L8 11.200L8.600 16L4 17.500Z" fill="#6fbf4f"/><path d="M5.500 12L7.500 11.500L7.800 14L6 14.500Z" fill="#e0503a"/><path d="M9.500 1.800L14.500 0.500L15.500 3.200L10.500 4.800Z" fill="#f2f2f2" stroke="#9a9a9a" stroke-width=".6"/><circle cx="13" cy="12.800" r="6.300" fill="#eceef5" stroke="#8d93a6" stroke-width=".9"/><circle cx="13" cy="12.800" r="4.200" fill="#cdc4ee"/><path d="M13 8.600A4.200 4.200 0 0 1 17.200 12.800L13 12.800Z" fill="#b9aee6"/><circle cx="13" cy="12.800" r="1.500" fill="#fff" stroke="#8d93a6" stroke-width=".5"/></svg>
<div class="t" style="left:53.5px;top:430.5px;height:20px;line-height:20px;font-size:15px;color:#1a1a1a;letter-spacing:-0.475px;">ChromeSetup</div>
<div class="t" style="left:532.5px;top:430.5px;height:20px;line-height:20px;font-size:15px;color:#626c7d;letter-spacing:-0.299px;">Toepassing</div>
<div class="t" style="left:710.5000000000001px;top:430.5px;height:20px;line-height:20px;font-size:15px;color:#626c7d;letter-spacing:-0.665px;">1.340 kB</div>
<svg class="b" style="left:28px;top:471px;" width="20" height="20" viewBox="0 0 20 20"><path d="M2.500 1.500H17.500V8H2.500Z" fill="#23295c"/><path d="M4 7.500Q4 2 9 2.500Q7 0.500 10 1Q15 1.500 16 7.500Z" fill="#2c73e0"/><path d="M6 8Q6.500 4.500 10.500 4.500Q14 5 14.500 8Z" fill="#eef4ff"/><path d="M2 8H18V18.300H2Z" fill="#2a2f63"/><path d="M2 8H18V10H2Z" fill="#454b8e"/><path d="M7.300 8V18.300M12.700 8V18.300" stroke="#3a4080" stroke-width="1"/><path d="M2 17.300H18V18.300H2Z" fill="#1b1f49"/></svg>
<div class="t" style="left:53.5px;top:471.5px;height:20px;line-height:20px;font-size:15px;color:#1a1a1a;letter-spacing:-0.265px;">Thunderbird</div>
<div class="t" style="left:532.5px;top:471.5px;height:20px;line-height:20px;font-size:15px;color:#626c7d;letter-spacing:-0.299px;">Toepassing</div>
<div class="t" style="left:701.9000000000001px;top:471.5px;height:20px;line-height:20px;font-size:15px;color:#626c7d;letter-spacing:-0.562px;">59.269 kB</div>
<svg class="b" style="left:28px;top:512px;" width="20" height="20" viewBox="0 0 20 20"><path d="M0.500 11Q0.500 1.500 9 0.500Q12 0 13 1.500Q19.500 3 19.500 11Z" fill="#2b6fdc"/><path d="M3 5Q6 1 11 1.500" stroke="#7fb6ff" stroke-width="1.200" fill="none"/><path d="M2.500 10.500Q4 5.500 10 5.500Q15 5.500 17 10.500Z" fill="#f3f7ff"/><path d="M2 7L6 8.500L3.500 10Z" fill="#1b3f9c"/><path d="M0.500 10.500H19.500V19.700H0.500Z" fill="#2a2f63"/><path d="M0.500 10.500H19.500V12.500H0.500Z" fill="#454b8e"/><path d="M7 10.500V19.700M13 10.500V19.700" stroke="#3a4080" stroke-width="1"/><path d="M0.500 18.700H19.500V19.700H0.500Z" fill="#1b1f49"/></svg>
<div class="t" style="left:53.5px;top:512.5px;height:20px;line-height:20px;font-size:15px;color:#1a1a1a;letter-spacing:-0.265px;">Thunderbird</div>
<div class="t" style="left:532.5px;top:512.5px;height:20px;line-height:20px;font-size:15px;color:#626c7d;letter-spacing:-0.299px;">Toepassing</div>
<div class="t" style="left:701.9000000000001px;top:512.5px;height:20px;line-height:20px;font-size:15px;color:#626c7d;letter-spacing:-0.562px;">59.050 kB</div>
<svg class="b" style="left:28px;top:551px;" width="20" height="20" viewBox="0 0 20 20"><path d="M0.500 11.500H7M13 11.500H19.500V19H0.500V11.500" fill="none" stroke="#a3a8ae" stroke-width="1"/><path d="M10 1.500V14M5.800 10L10 14.300L14.200 10" fill="none" stroke="#4a9ae0" stroke-width="1"/><rect x="15.500" y="14" width="2" height="1.600" fill="#8d9298"/></svg>
<div class="t" style="left:53.5px;top:553.5px;height:20px;line-height:20px;font-size:15px;color:#1a1a1a;letter-spacing:0.092px;">gimp-2.99.1</div>
<div class="t" style="left:532.5px;top:553.5px;height:20px;line-height:20px;font-size:15px;color:#626c7d;letter-spacing:-0.299px;">Toepassing</div>
<div class="t" style="left:694.7px;top:553.5px;height:20px;line-height:20px;font-size:15px;color:#626c7d;letter-spacing:-0.621px;">225.068 kB</div>
<svg class="b" style="left:28px;top:593px;" width="20" height="20" viewBox="0 0 20 20"><defs><radialGradient id="g13"><stop offset="0" stop-color="#fff"/><stop offset=".45" stop-color="#e6e6e6"/><stop offset="1" stop-color="#bdbdbd"/></radialGradient></defs><path d="M2.500 0.600H12L17.800 6.400V19.400H2.500Z" fill="#fff" stroke="#6f6f6f" stroke-width="1"/><path d="M12 0.600V6.400H17.800" fill="none" stroke="#6f6f6f" stroke-width="1"/><circle cx="10" cy="12" r="5" fill="url(#g13)" stroke="#a8a8a8" stroke-width=".7"/><circle cx="10" cy="12" r="1.700" fill="#f6f6f6" stroke="#9e9e9e" stroke-width=".6"/></svg>
<div class="t" style="left:53.5px;top:594.5px;height:20px;line-height:20px;font-size:15px;color:#1a1a1a;letter-spacing:-0.139px;">Zorin-OS-16</div>
<div class="t" style="left:532.5px;top:594.5px;height:20px;line-height:20px;font-size:15px;color:#626c7d;letter-spacing:-0.062px;">Schijfkopiebestand</div>
<div class="t" style="left:683.6000000000001px;top:594.5px;height:20px;line-height:20px;font-size:15px;color:#626c7d;letter-spacing:-0.634px;">3.025.120 kB</div>
<svg class="b" style="left:28px;top:634px;" width="20" height="20" viewBox="0 0 20 20"><defs><radialGradient id="g14"><stop offset="0" stop-color="#fff"/><stop offset=".45" stop-color="#e6e6e6"/><stop offset="1" stop-color="#bdbdbd"/></radialGradient></defs><path d="M2.500 0.600H12L17.800 6.400V19.400H2.500Z" fill="#fff" stroke="#6f6f6f" stroke-width="1"/><path d="M12 0.600V6.400H17.800" fill="none" stroke="#6f6f6f" stroke-width="1"/><circle cx="10" cy="12" r="5" fill="url(#g14)" stroke="#a8a8a8" stroke-width=".7"/><circle cx="10" cy="12" r="1.700" fill="#f6f6f6" stroke="#9e9e9e" stroke-width=".6"/></svg>
<div class="t" style="left:53.5px;top:635.5px;height:20px;line-height:20px;font-size:15px;color:#1a1a1a;letter-spacing:-0.143px;">ubuntu-22.04</div>
<div class="t" style="left:532.5px;top:635.5px;height:20px;line-height:20px;font-size:15px;color:#626c7d;letter-spacing:-0.062px;">Schijfkopiebestand</div>
<div class="t" style="left:683.6000000000001px;top:635.5px;height:20px;line-height:20px;font-size:15px;color:#626c7d;letter-spacing:-0.634px;">4.812.096 kB</div>
<svg class="b" style="left:28px;top:676px;" width="20" height="20" viewBox="0 0 20 20"><path d="M6 8.500L14.500 1.500Q15.500 0.800 16.500 1.500L19 3.500Q19.800 4.500 19 5.500L11.500 13Z" fill="#4a4a4a"/><path d="M7.500 8.500L14.800 2.500L16 3.500L8.800 9.800Z" fill="#9a9a9a"/><path d="M2.500 11.500L6 8.500L11.500 13L8 16.500Z" fill="#dcdcdc" stroke="#8a8a8a" stroke-width=".6"/><path d="M0.500 13.500L2.500 11.800L5 14.200L3 16Z" fill="#8a8a8a"/><path d="M4.500 11.500L6 10.300M6 12.800L7.500 11.600" stroke="#777" stroke-width=".8"/><path d="M15.0 9.5Q17.25 10.97 19.5 10.97V14.54Q19.5 17.9 15.0 20.0Q10.5 17.9 10.5 14.54V10.97Q12.75 10.97 15.0 9.5Z" fill="#ffc50d"/><path d="M15.0 9.5Q12.75 10.97 10.5 10.97V14.54H15.0Z" fill="#2496e6"/><path d="M15.0 14.54H19.5Q19.5 17.9 15.0 20.0Z" fill="#1a82d8"/></svg>
<div class="t" style="left:53.5px;top:676.5px;height:20px;line-height:20px;font-size:15px;color:#1a1a1a;letter-spacing:-0.577px;">rufus-4.1.exe</div>
<div class="t" style="left:532.5px;top:676.5px;height:20px;line-height:20px;font-size:15px;color:#626c7d;letter-spacing:-0.299px;">Toepassing</div>
<div class="t" style="left:710.5000000000001px;top:676.5px;height:20px;line-height:20px;font-size:15px;color:#626c7d;letter-spacing:-0.665px;">1.378 kB</div>
<svg class="b" style="left:28px;top:714px;" width="20" height="20" viewBox="0 0 20 20"><path d="M2 13Q2 1 10 1Q18 1 18 13V18Q18 19.500 16.500 19.500H3.500Q2 19.500 2 18Z" fill="#34587e"/><path d="M2 15H18V18Q18 19.500 16.500 19.500H3.500Q2 19.500 2 18Z" fill="#54708f"/><circle cx="10" cy="8.300" r="5.600" fill="#c3d0e0"/><circle cx="10" cy="8.300" r="3.600" fill="#9fb3cb"/><circle cx="10" cy="7.500" r="1.700" fill="#e8eef6"/><path d="M10 8L8.300 13.500H11.700Z" fill="#7a93b2"/><circle cx="15.300" cy="17.300" r="0.900" fill="#5fe062"/></svg>
<div class="t" style="left:53.5px;top:717.5px;height:20px;line-height:20px;font-size:15px;color:#1a1a1a;letter-spacing:-1px;">SyncBack_Se</div>
<div class="t" style="left:532.5px;top:717.5px;height:20px;line-height:20px;font-size:15px;color:#626c7d;letter-spacing:-0.299px;">Toepassing</div>
<div class="t" style="left:701.9000000000001px;top:717.5px;height:20px;line-height:20px;font-size:15px;color:#626c7d;letter-spacing:-0.562px;">41.493 kB</div>
<svg class="b" style="left:28px;top:758px;" width="20" height="20" viewBox="0 0 20 20"><path d="M1 8H18.500V19.500H1Z" fill="#15294f"/><path d="M1 0.500H6L9.800 5.500L13.500 0.500H18.500V10H1Z" fill="#1d3a6e"/><path d="M1 10.500V0.500H5.500L9.800 6.500L14 0.500H18.500V10.500H14.500V5L9.800 10.500L5 5V10.500Z" fill="#f6c51c"/></svg>
<div class="t" style="left:53.5px;top:758.5px;height:20px;line-height:20px;font-size:15px;color:#1a1a1a;letter-spacing:-0.308px;">mullvadbrow</div>
<div class="t" style="left:532.5px;top:758.5px;height:20px;line-height:20px;font-size:15px;color:#626c7d;letter-spacing:-0.299px;">Toepassing</div>
<div class="t" style="left:701.9000000000001px;top:758.5px;height:20px;line-height:20px;font-size:15px;color:#626c7d;letter-spacing:-0.562px;">75.254 kB</div>
</div>
<div class="b" style="left:1197px;top:184px;width:19px;height:806px;background:#f0f0f0;"></div>
<div class="b" style="left:1204px;top:205px;width:6px;height:114px;background:#868686;"></div>
<div class="b" style="left:2px;top:990px;width:1214px;height:29px;background:#fff;"></div>
<div class="t" style="left:20px;top:994.5px;height:20px;line-height:20px;font-size:15px;color:#3a4454;letter-spacing:-0.227px;">127 items</div>
<div class="b" style="left:95px;top:997px;width:1px;height:15px;background:#e2e2e2;"></div>
<div class="t" style="left:109px;top:994.5px;height:20px;line-height:20px;font-size:15px;color:#3a4454;letter-spacing:-0.085px;">1 item geselecteerd</div>
<div class="t" style="left:247.4px;top:994.5px;height:20px;line-height:20px;font-size:15px;color:#3a4454;letter-spacing:-0.511px;">26,6 MB</div>
<div class="b" style="left:312px;top:997px;width:1px;height:15px;background:#e2e2e2;"></div>
<div class="b" style="left:1156px;top:990px;width:28px;height:29px;background:#cfe8f7;border:1px solid #2b9de0;"></div>
<div class="b" style="left:1161px;top:995px;width:19px;height:19px;background:#e6f0f7;border-radius:3px;"></div>
<svg class="b" style="left:1164px;top:998px;" width="14" height="15" viewBox="0 0 14 15"><path d="M0 1.300H14M0 5.400H14M0 9.400H14M0 13.400H14" stroke="#111" stroke-width="1.300"/></svg>
<div class="b" style="left:1188px;top:994px;width:20px;height:20px;background:#fafafa;border-radius:3px;"></div>
<svg class="b" style="left:1191px;top:997px;" width="14" height="15" viewBox="0 0 14 15"><rect x="0.650" y="0.650" width="12.700" height="10.700" fill="none" stroke="#111" stroke-width="1.300"/><path d="M0 13.500H14" stroke="#111" stroke-width="1.200"/></svg>
<div class="b" style="left:406px;top:266px;width:380px;height:738px;background:#f9f9f9;border:1px solid #e0e0e0;border-radius:8px;box-shadow:0 6px 18px rgba(0,0,0,.10),0 0 8px rgba(0,0,0,.05);"></div>
<div class="t" style="left:452px;top:276.5px;height:20px;line-height:20px;font-size:15px;color:#111;font-weight:700;letter-spacing:-0.391px;">Openen</div>
<div class="t" style="left:452px;top:304.5px;height:20px;line-height:20px;font-size:15px;color:#111;letter-spacing:0.048px;">Allow through Windows Firewall</div>
<svg class="b" style="left:419px;top:306.0px;" width="20" height="16" viewBox="0 0 20 16"><rect x="0.500" y="0.500" width="19" height="15" fill="#fdfdfd" stroke="#7a7a7a" stroke-width="1"/><rect x="1" y="1" width="18" height="2" fill="#e6e6e6"/><rect x="6" y="4.500" width="8.500" height="9" fill="#1f7fd6"/><path d="M2.500 5.500H5M2.500 7.500H5M2.500 9.500H5M2.500 11.500H5M15.500 5.500H18M15.500 7.500H18M15.500 9.500H18M15.500 11.500H18" stroke="#8a8a8a" stroke-width=".8"/></svg>
<div class="t" style="left:452px;top:332.5px;height:20px;line-height:20px;font-size:15px;color:#111;letter-spacing:-0.043px;">Block through Windows Firewall</div>
<svg class="b" style="left:419px;top:334.0px;" width="20" height="16" viewBox="0 0 20 16"><rect x="0.500" y="0.500" width="19" height="15" fill="#fdfdfd" stroke="#7a7a7a" stroke-width="1"/><rect x="1" y="1" width="18" height="2" fill="#e6e6e6"/><rect x="6" y="4.500" width="8.500" height="9" fill="#1f7fd6"/><path d="M2.500 5.500H5M2.500 7.500H5M2.500 9.500H5M2.500 11.500H5M15.500 5.500H18M15.500 7.500H18M15.500 9.500H18M15.500 11.500H18" stroke="#8a8a8a" stroke-width=".8"/></svg>
<div class="t" style="left:452px;top:360.5px;height:20px;line-height:20px;font-size:15px;color:#111;letter-spacing:0.027px;">Als administrator uitvoeren</div>
<svg class="b" style="left:420px;top:360.0px;" width="18" height="19" viewBox="0 0 18 19"><path d="M9 0.300Q13 2.500 17.700 2.800V9Q17.500 15 9 18.700Q0.500 15 0.300 9V2.800Q5 2.500 9 0.300Z" fill="#ffc50d"/><path d="M9 0.300Q5 2.500 0.300 2.800V9.300H9Z" fill="#2496e6"/><path d="M9 9.300H17.700Q17.300 15 9 18.700Z" fill="#1a82d8"/></svg>
<div class="t" style="left:452px;top:388.5px;height:20px;line-height:20px;font-size:15px;color:#111;letter-spacing:-0.06px;">Als andere gebruiker uitvoeren</div>
<div class="t" style="left:452px;top:416.5px;height:20px;line-height:20px;font-size:15px;color:#111;letter-spacing:-0.218px;">Toevoegen aan Favorieten</div>
<div class="t" style="left:452px;top:444.5px;height:20px;line-height:20px;font-size:15px;color:#111;letter-spacing:0.135px;">Compatibiliteitsproblemen oplossen</div>
<div class="t" style="left:452px;top:472.5px;height:20px;line-height:20px;font-size:15px;color:#111;letter-spacing:-0.254px;">Aan Start vastmaken</div>
<div class="t" style="left:452px;top:500.5px;height:20px;line-height:20px;font-size:15px;color:#111;letter-spacing:0.263px;">7-Zip</div>
<svg class="b" style="left:762px;top:505.0px;" width="6" height="9" viewBox="0 0 6 9"><path d="M0.700 0.500L4.800 4.500L0.700 8.500" fill="none" stroke="#1a1a1a" stroke-width="1.300"/></svg>
<div class="t" style="left:452px;top:528.5px;height:20px;line-height:20px;font-size:15px;color:#111;letter-spacing:-0.138px;">Scannen met Microsoft Defender...</div>
<svg class="b" style="left:420px;top:527.5px;" width="17" height="19" viewBox="0 0 17 19"><path d="M8.500 0.200L16.800 3V10Q16.500 14 8.500 18.800Q0.500 14 0.200 10V3Z" fill="#1486dc"/><path d="M8.500 0.200L0.200 3V9H8.500Z" fill="#28b4f0"/><path d="M8.500 9H16.800V10Q16.500 14 8.500 18.800Z" fill="#0d58a8"/><path d="M0.200 9H8.500V18.800Q0.500 14 0.200 10Z" fill="#1272c8"/></svg>
<div class="t" style="left:452px;top:556.5px;height:20px;line-height:20px;font-size:15px;color:#111;letter-spacing:-0.043px;">Verwijder zonder een spoor</div>
<svg class="b" style="left:420px;top:556.5px;" width="18" height="18" viewBox="0 0 18 18"><rect x="0" y="0" width="18" height="18" fill="#4a86d8"/><path d="M0 0H18V11H0Z" fill="#6b9be0"/><path d="M6 0H18V12L16 13H3Z" fill="#f2f2f2"/><path d="M7.500 0.500H17.500L11.500 8.500H16.500L15.500 12H4L10.500 3.800H6.500Z" fill="#b81c1c"/><path d="M7.500 0.500H17.500L16 2.500H7Z" fill="#e07070"/></svg>
<div class="b" style="left:413px;top:584px;width:367px;height:1px;background:#e0e0e0;"></div>
<div class="t" style="left:452px;top:593.5px;height:20px;line-height:20px;font-size:15px;color:#111;letter-spacing:0.045px;">Toegang verlenen tot</div>
<svg class="b" style="left:762px;top:598.0px;" width="6" height="9" viewBox="0 0 6 9"><path d="M0.700 0.500L4.800 4.500L0.700 8.500" fill="none" stroke="#1a1a1a" stroke-width="1.300"/></svg>
<div class="t" style="left:452px;top:621.5px;height:20px;line-height:20px;font-size:15px;color:#111;letter-spacing:-0.156px;">Aan taakbalk vastmaken</div>
<div class="t" style="left:452px;top:649.5px;height:20px;line-height:20px;font-size:15px;color:#111;letter-spacing:-0.009px;">Als pad kopiëren</div>
<div class="t" style="left:452px;top:677.5px;height:20px;line-height:20px;font-size:15px;color:#111;letter-spacing:-0.041px;">Delen</div>
<svg class="b" style="left:419px;top:678.5px;" width="19" height="17" viewBox="0 0 19 17"><path d="M0.800 5V15.200H14V13" fill="none" stroke="#2b2b2b" stroke-width="1.400"/><path d="M12.500 1L18 6L12.500 11V8Q7 7.500 4 12.500Q4.500 5 12.500 4Z" fill="none" stroke="#2b2b2b" stroke-width="1.300" stroke-linejoin="round"/></svg>
<div class="t" style="left:452px;top:705.5px;height:20px;line-height:20px;font-size:15px;color:#111;letter-spacing:-0.105px;">Vorige versies terugzetten</div>
<div class="b" style="left:413px;top:733px;width:367px;height:1px;background:#e0e0e0;"></div>
<div class="t" style="left:452px;top:742.5px;height:20px;line-height:20px;font-size:15px;color:#111;letter-spacing:-0.095px;">Kopiëren naar</div>
<svg class="b" style="left:762px;top:747.0px;" width="6" height="9" viewBox="0 0 6 9"><path d="M0.700 0.500L4.800 4.500L0.700 8.500" fill="none" stroke="#1a1a1a" stroke-width="1.300"/></svg>
<div class="b" style="left:413px;top:770px;width:367px;height:1px;background:#e0e0e0;"></div>
<div class="t" style="left:452px;top:779.5px;height:20px;line-height:20px;font-size:15px;color:#111;letter-spacing:-0.08px;">Knippen</div>
<div class="t" style="left:452px;top:807.5px;height:20px;line-height:20px;font-size:15px;color:#111;letter-spacing:-0.043px;">Kopiëren</div>
<div class="b" style="left:413px;top:835px;width:367px;height:1px;background:#e0e0e0;"></div>
<div class="t" style="left:452px;top:844.5px;height:20px;line-height:20px;font-size:15px;color:#111;letter-spacing:-0.044px;">Snelkoppeling maken</div>
<div class="t" style="left:452px;top:872.5px;height:20px;line-height:20px;font-size:15px;color:#111;letter-spacing:-0.09px;">Verwijderen</div>
<div class="t" style="left:452px;top:900.5px;height:20px;line-height:20px;font-size:15px;color:#111;letter-spacing:0.058px;">Naam wijzigen</div>
<div class="b" style="left:413px;top:928px;width:367px;height:1px;background:#e0e0e0;"></div>
<div class="t" style="left:452px;top:937.5px;height:20px;line-height:20px;font-size:15px;color:#111;letter-spacing:-0.302px;">Eigenschappen</div>
<div class="b" style="left:413px;top:965px;width:367px;height:1px;background:#e0e0e0;"></div>
<div class="t" style="left:452px;top:974.5px;height:20px;line-height:20px;font-size:15px;color:#111;letter-spacing:-0.267px;">HDCleaner</div>
<svg class="b" style="left:762px;top:979.0px;" width="6" height="9" viewBox="0 0 6 9"><path d="M0.700 0.500L4.800 4.500L0.700 8.500" fill="none" stroke="#1a1a1a" stroke-width="1.300"/></svg>
<div class="b" style="left:0px;top:0px;width:1217px;height:1px;background:#6c6b6a;"></div>
<div class="b" style="left:0px;top:1px;width:1px;height:1019px;background:#f0f0f0;"></div>
<div class="b" style="left:1px;top:0px;width:1px;height:1020px;background:#757575;"></div>
<div class="b" style="left:1216px;top:0px;width:1px;height:1020px;background:#6d6d6d;"></div>
<div class="b" style="left:0px;top:1019px;width:1217px;height:1px;background:#6d6d6d;"></div>
<div class="b" style="left:0px;top:122px;width:1px;height:6px;background:#111;"></div>
<div class="b" style="left:0px;top:135px;width:1px;height:6px;background:#111;"></div>
</body></html>
